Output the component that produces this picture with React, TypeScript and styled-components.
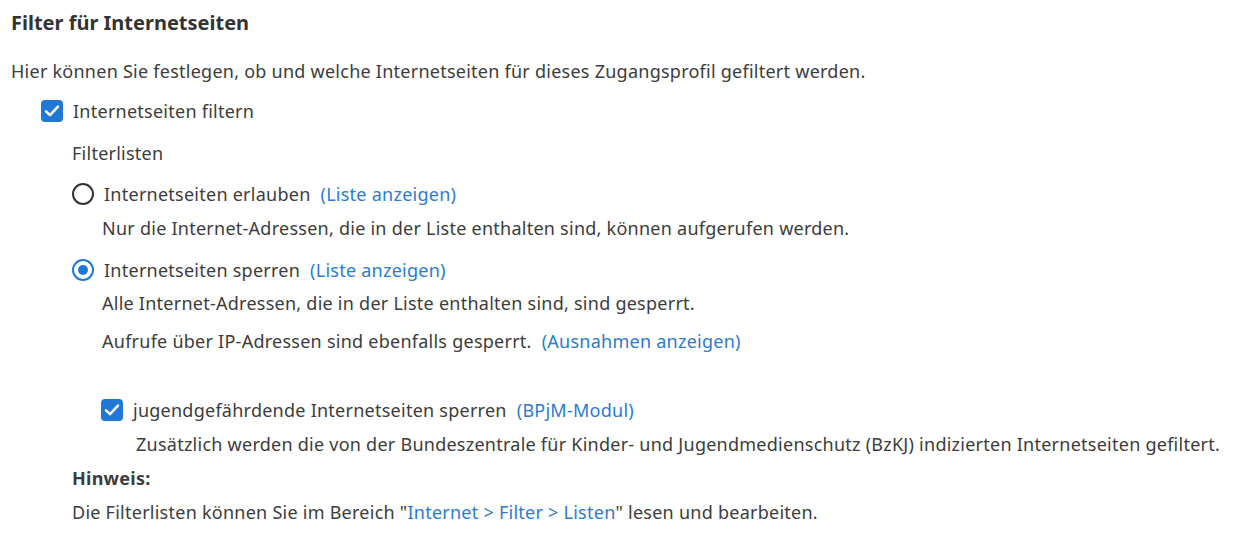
import React from "react";
import styled, { createGlobalStyle } from "styled-components";

const FONT = `"Noto Sans", "Open Sans", sans-serif`;
const TEXT = "#3c3c3c";
const LINK = "#2b7bd0";
const BLUE = "#1f78d6";

const Global = createGlobalStyle`
  html, body { margin: 0; padding: 0; background: #ffffff; }
  body { font-family: ${FONT}; color: ${TEXT}; font-size: 18px; letter-spacing: 0.25px; }
`;

const Page = styled.div`
  padding: 6px 0 0 11px;
`;

const Title = styled.h2`
  margin: 0;
  font-size: 20px;
  font-weight: 700;
  letter-spacing: 0;
  line-height: 34px;
  color: #333;
`;

const Line = styled.div<{ $mt?: number; $ml?: number; $bold?: boolean }>`
  display: flex;
  align-items: center;
  height: 34px;
  line-height: 34px;
  margin-top: ${(p) => p.$mt ?? 0}px;
  margin-left: ${(p) => p.$ml ?? 0}px;
  font-weight: ${(p) => (p.$bold ? 700 : 400)};
  white-space: nowrap;
`;

const Block = styled.div<{ $ml: number }>`
  margin-left: ${(p) => p.$ml}px;
`;

const Box = styled.span`
  display: inline-flex;
  align-items: center;
  justify-content: center;
  width: 22px;
  height: 22px;
  border-radius: 4px;
  background: ${BLUE};
  margin-right: 10px;
  flex: none;
`;

const Radio = styled.span<{ $on?: boolean }>`
  box-sizing: border-box;
  display: inline-flex;
  align-items: center;
  justify-content: center;
  width: 22px;
  height: 22px;
  border-radius: 50%;
  border: 2px solid ${(p) => (p.$on ? BLUE : "#333")};
  margin-right: 10px;
  flex: none;
  &::after {
    content: "";
    display: ${(p) => (p.$on ? "block" : "none")};
    width: 10px;
    height: 10px;
    border-radius: 50%;
    background: ${BLUE};
  }
`;

const Link = styled.a`
  color: ${LINK};
  text-decoration: none;
  margin-left: 10px;
  cursor: pointer;
`;

const InlineLink = styled.a`
  color: ${LINK};
  text-decoration: none;
  cursor: pointer;
`;

const Check = () => (
  <Box>
    <svg width="18" height="18" viewBox="0 0 18 18" fill="none">
      <path d="M3 9.4 L7 13.2 L15 4.6" stroke="#fff" strokeWidth="2.5" strokeLinecap="round" strokeLinejoin="round" />
    </svg>
  </Box>
);

export default function App() {
  return (
    <Page>
      <Global />
      <Title>Filter für Internetseiten</Title>
      <Line $mt={14}>Hier können Sie festlegen, ob und welche Internetseiten für dieses Zugangsprofil gefiltert werden.</Line>
      <Line $mt={6} $ml={30}>
        <Check />
        Internetseiten filtern
      </Line>
      <Block $ml={61}>
        <Line $mt={8}>Filterlisten</Line>
        <Line $mt={7}>
          <Radio />
          Internetseiten erlauben
          <Link>(Liste anzeigen)</Link>
        </Line>
        <Block $ml={30}>
          <Line>Nur die Internet-Adressen, die in der Liste enthalten sind, können aufgerufen werden.</Line>
        </Block>
        <Line $mt={8}>
          <Radio $on />
          Internetseiten sperren
          <Link>(Liste anzeigen)</Link>
        </Line>
        <Block $ml={30}>
          <Line $mt={-1}>Alle Internet-Adressen, die in der Liste enthalten sind, sind gesperrt.</Line>
          <Line $mt={4}>
            Aufrufe über IP-Adressen sind ebenfalls gesperrt.
            <Link>(Ausnahmen anzeigen)</Link>
          </Line>
          <Line $mt={35} $ml={-1}>
            <Check />
            jugendgefährdende Internetseiten sperren
            <Link>(BPjM-Modul)</Link>
          </Line>
          <Line $ml={34}>
            Zusätzlich werden die von der Bundeszentrale für Kinder- und Jugendmedienschutz (BzKJ) indizierten Internetseiten gefiltert.
          </Line>
        </Block>
        <Line $bold>Hinweis:</Line>
        <Line>
          Die Filterlisten können Sie im Bereich "<InlineLink>Internet &gt; Filter &gt; Listen</InlineLink>" lesen und bearbeiten.
        </Line>
      </Block>
    </Page>
  );
}
